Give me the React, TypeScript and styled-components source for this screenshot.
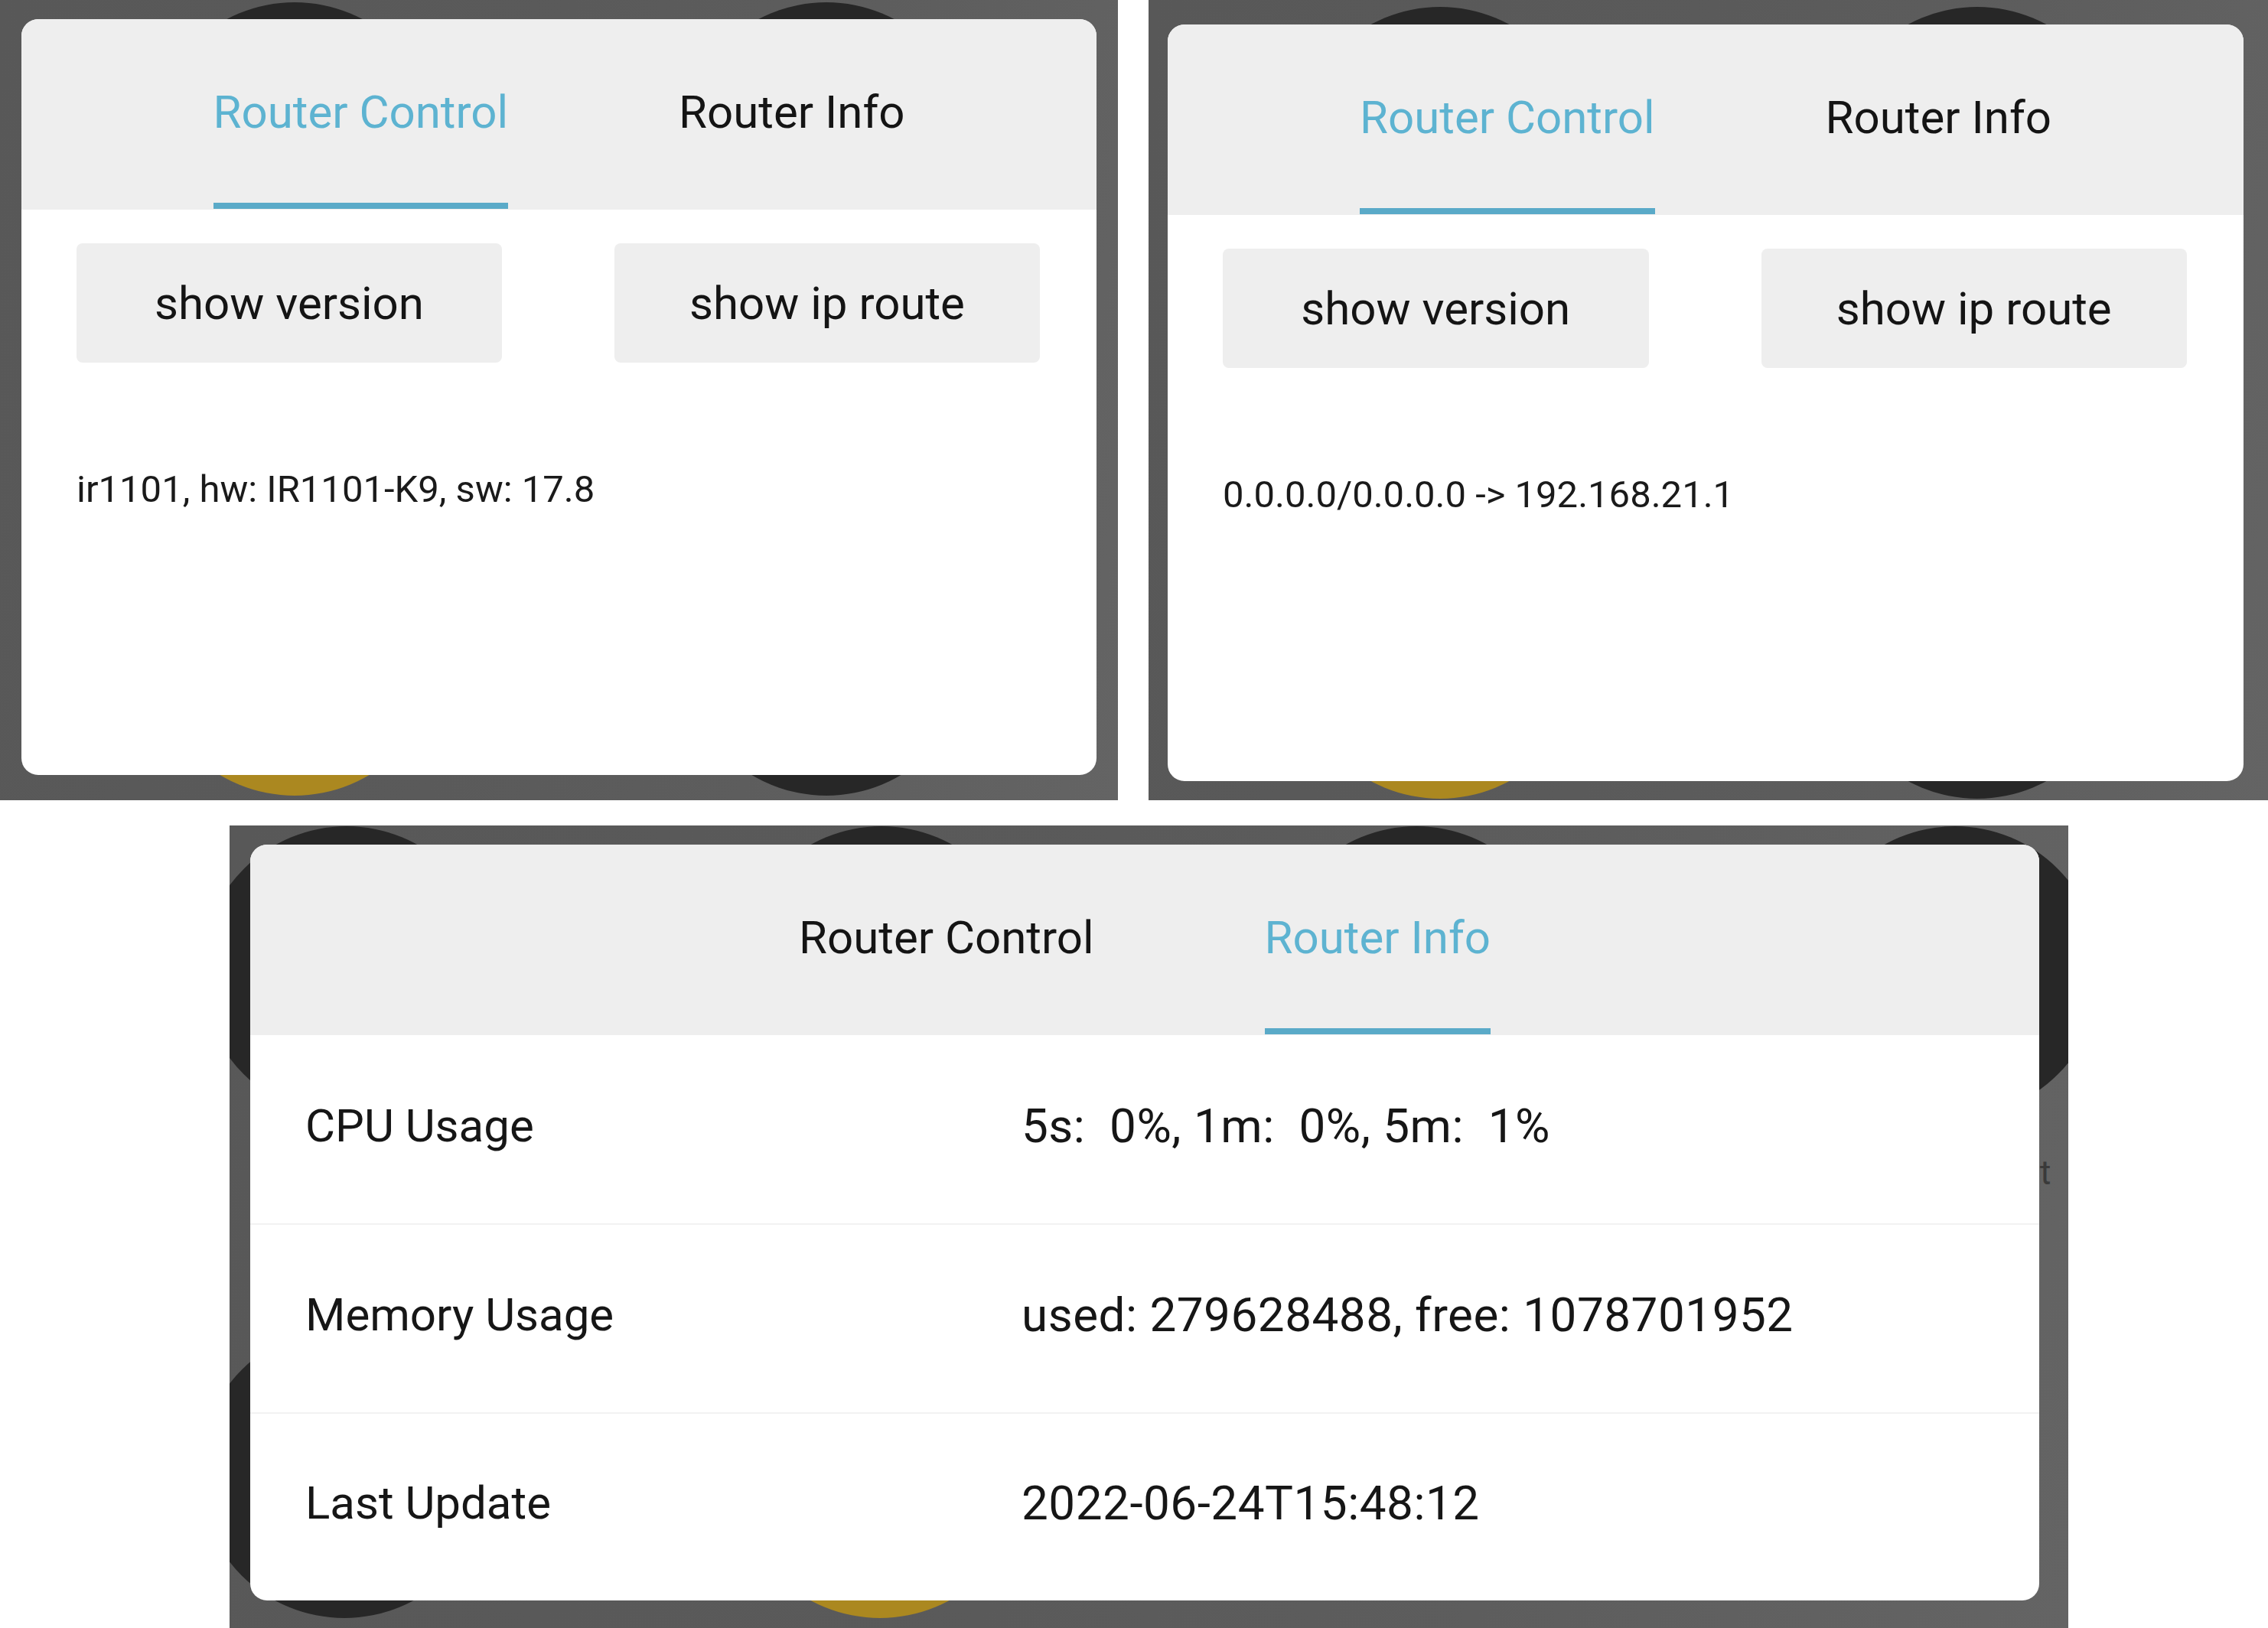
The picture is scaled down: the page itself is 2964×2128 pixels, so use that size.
import React from "react";
import styled, { createGlobalStyle } from "styled-components";

const Global = createGlobalStyle`
  html, body { margin: 0; padding: 0; background: #ffffff; }
  body { font-family: Roboto, "Liberation Sans", Arial, sans-serif; }
  * { box-sizing: border-box; }
`;

const Page = styled.div`
  width: 2964px;
  height: 2128px;
  display: flex;
  flex-direction: column;
  background: #ffffff;
  overflow: hidden;
`;

const TopRow = styled.div`
  display: flex;
  gap: 40px;
`;

const BottomRow = styled.div`
  display: flex;
  margin-top: 33px;
  padding-left: 300px;
`;

const Shot = styled.div<{ $w: number; $h: number; $pt: number; $pl: number }>`
  position: relative;
  overflow: hidden;
  width: ${(p) => p.$w}px;
  height: ${(p) => p.$h}px;
  padding: ${(p) => p.$pt}px 0 0 ${(p) => p.$pl}px;
  background: linear-gradient(100deg, #585858 0%, #5a5a5a 45%, #5d5d5d 70%, #646464 100%);
`;

const Blob = styled.div<{ $x: number; $y: number; $gold?: boolean; $r: number }>`
  position: absolute;
  left: ${(p) => p.$x - p.$r}px;
  top: ${(p) => p.$y - p.$r}px;
  width: ${(p) => p.$r * 2}px;
  height: ${(p) => p.$r * 2}px;
  border-radius: 50%;
  background: ${(p) => (p.$gold ? "#ab8820" : "#272727")};
  z-index: 0;
`;

const Peek = styled.span<{ $x: number; $y: number }>`
  position: absolute;
  left: ${(p) => p.$x}px;
  top: ${(p) => p.$y}px;
  font-size: 44px;
  color: #3a3a3a;
  font-family: Roboto, sans-serif;
  z-index: 0;
`;

const Card = styled.div<{ $w: number; $h: number }>`
  position: relative;
  z-index: 1;
  width: ${(p) => p.$w}px;
  height: ${(p) => p.$h}px;
  background: #ffffff;
  border-radius: 22px;
  overflow: hidden;
  display: flex;
  flex-direction: column;
`;

const TabBar = styled.div`
  height: 249px;
  flex: 0 0 249px;
  background: #eeeeee;
  display: flex;
  justify-content: center;
  align-items: flex-start;
  gap: 223px;
  padding-top: 86px;
`;

const Tab = styled.div<{ $active?: boolean }>`
  display: flex;
  flex-direction: column;
  align-items: stretch;
  font-size: 60px;
  line-height: 72px;
  font-weight: 400;
  color: ${(p) => (p.$active ? "#5db3d1" : "#141414")};
  white-space: nowrap;
`;

const TabLine = styled.div<{ $active?: boolean }>`
  margin-top: 82px;
  height: 8px;
  background: ${(p) => (p.$active ? "#5aaac8" : "transparent")};
`;

const ControlBody = styled.div`
  padding: 44px 74px 0 72px;
  display: flex;
  flex-direction: column;
`;

const ButtonRow = styled.div`
  display: grid;
  grid-template-columns: 1fr 1fr;
  gap: 147px;
`;

const CmdButton = styled.button`
  height: 156px;
  border: none;
  border-radius: 8px;
  background: #eeeeee;
  font-family: Roboto, sans-serif;
  font-size: 60px;
  color: #141414;
  cursor: pointer;
`;

const Output = styled.div`
  margin-top: 137px;
  font-size: 49px;
  line-height: 58px;
  color: #1a1a1a;
  white-space: pre;
`;

const InfoTable = styled.div`
  flex: 1;
  display: grid;
  grid-template-rows: repeat(3, 1fr);
`;

const InfoRow = styled.div<{ $first?: boolean }>`
  display: grid;
  grid-template-columns: 936px 1fr;
  align-items: center;
  padding-left: 72px;
  padding-bottom: 10px;
  border-top: ${(p) => (p.$first ? "none" : "2px solid #f2f2f2")};
  font-size: 60px;
  color: #161616;
  white-space: pre;
`;

const Label = styled.span``;

const Value = styled.span`
  font-size: 62px;
  letter-spacing: 0.5px;
`;

type Circle = { x: number; y: number; gold?: boolean };

function Tabs({ active }: { active: "control" | "info" }) {
  return (
    <TabBar>
      <Tab $active={active === "control"}>
        Router Control
        <TabLine $active={active === "control"} />
      </Tab>
      <Tab $active={active === "info"}>
        Router Info
        <TabLine $active={active === "info"} />
      </Tab>
    </TabBar>
  );
}

function ControlCard({ w, h, output }: { w: number; h: number; output: string }) {
  return (
    <Card $w={w} $h={h}>
      <Tabs active="control" />
      <ControlBody>
        <ButtonRow>
          <CmdButton>show version</CmdButton>
          <CmdButton>show ip route</CmdButton>
        </ButtonRow>
        <Output>{output}</Output>
      </ControlBody>
    </Card>
  );
}

const infoRows = [
  { label: "CPU Usage", value: "5s:  0%, 1m:  0%, 5m:  1%" },
  { label: "Memory Usage", value: "used: 279628488, free: 1078701952" },
  { label: "Last Update", value: "2022-06-24T15:48:12" },
];

function InfoCard() {
  return (
    <Card $w={2338} $h={988}>
      <Tabs active="info" />
      <InfoTable>
        {infoRows.map((r, i) => (
          <InfoRow key={r.label} $first={i === 0}>
            <Label>{r.label}</Label>
            <Value>{r.value}</Value>
          </InfoRow>
        ))}
      </InfoTable>
    </Card>
  );
}

const R = 190;

const shot1Circles: Circle[] = [
  { x: 385, y: 3 + R },
  { x: 1080, y: 3 + R },
  { x: 385, y: 1040 - R, gold: true },
  { x: 1080, y: 1040 - R },
];

const shot2Circles: Circle[] = [
  { x: 381, y: 9 + R },
  { x: 1083, y: 9 + R },
  { x: 381, y: 1044 - R, gold: true },
  { x: 1083, y: 1044 - R },
];

const shot3Circles: Circle[] = [
  { x: 153, y: 1 + R },
  { x: 852, y: 1 + R },
  { x: 1551, y: 1 + R },
  { x: 2255, y: 1 + R },
  { x: 150, y: 1036 - R },
  { x: 850, y: 1036 - R, gold: true },
];

function Circles({ list }: { list: Circle[] }) {
  return (
    <>
      {list.map((c, i) => (
        <Blob key={i} $x={c.x} $y={c.y} $r={R} $gold={c.gold} />
      ))}
    </>
  );
}

export default function App() {
  return (
    <>
      <Global />
      <Page>
        <TopRow>
          <Shot $w={1461} $h={1046} $pt={25} $pl={28}>
            <Circles list={shot1Circles} />
            <ControlCard w={1405} h={988} output="ir1101, hw: IR1101-K9, sw: 17.8" />
          </Shot>
          <Shot $w={1463} $h={1046} $pt={32} $pl={25}>
            <Circles list={shot2Circles} />
            <ControlCard w={1406} h={989} output="0.0.0.0/0.0.0.0 -> 192.168.21.1" />
          </Shot>
        </TopRow>
        <BottomRow>
          <Shot $w={2403} $h={1049} $pt={25} $pl={27}>
            <Circles list={shot3Circles} />
            <Peek $x={2366} $y={428}>t</Peek>
            <InfoCard />
          </Shot>
        </BottomRow>
      </Page>
    </>
  );
}
